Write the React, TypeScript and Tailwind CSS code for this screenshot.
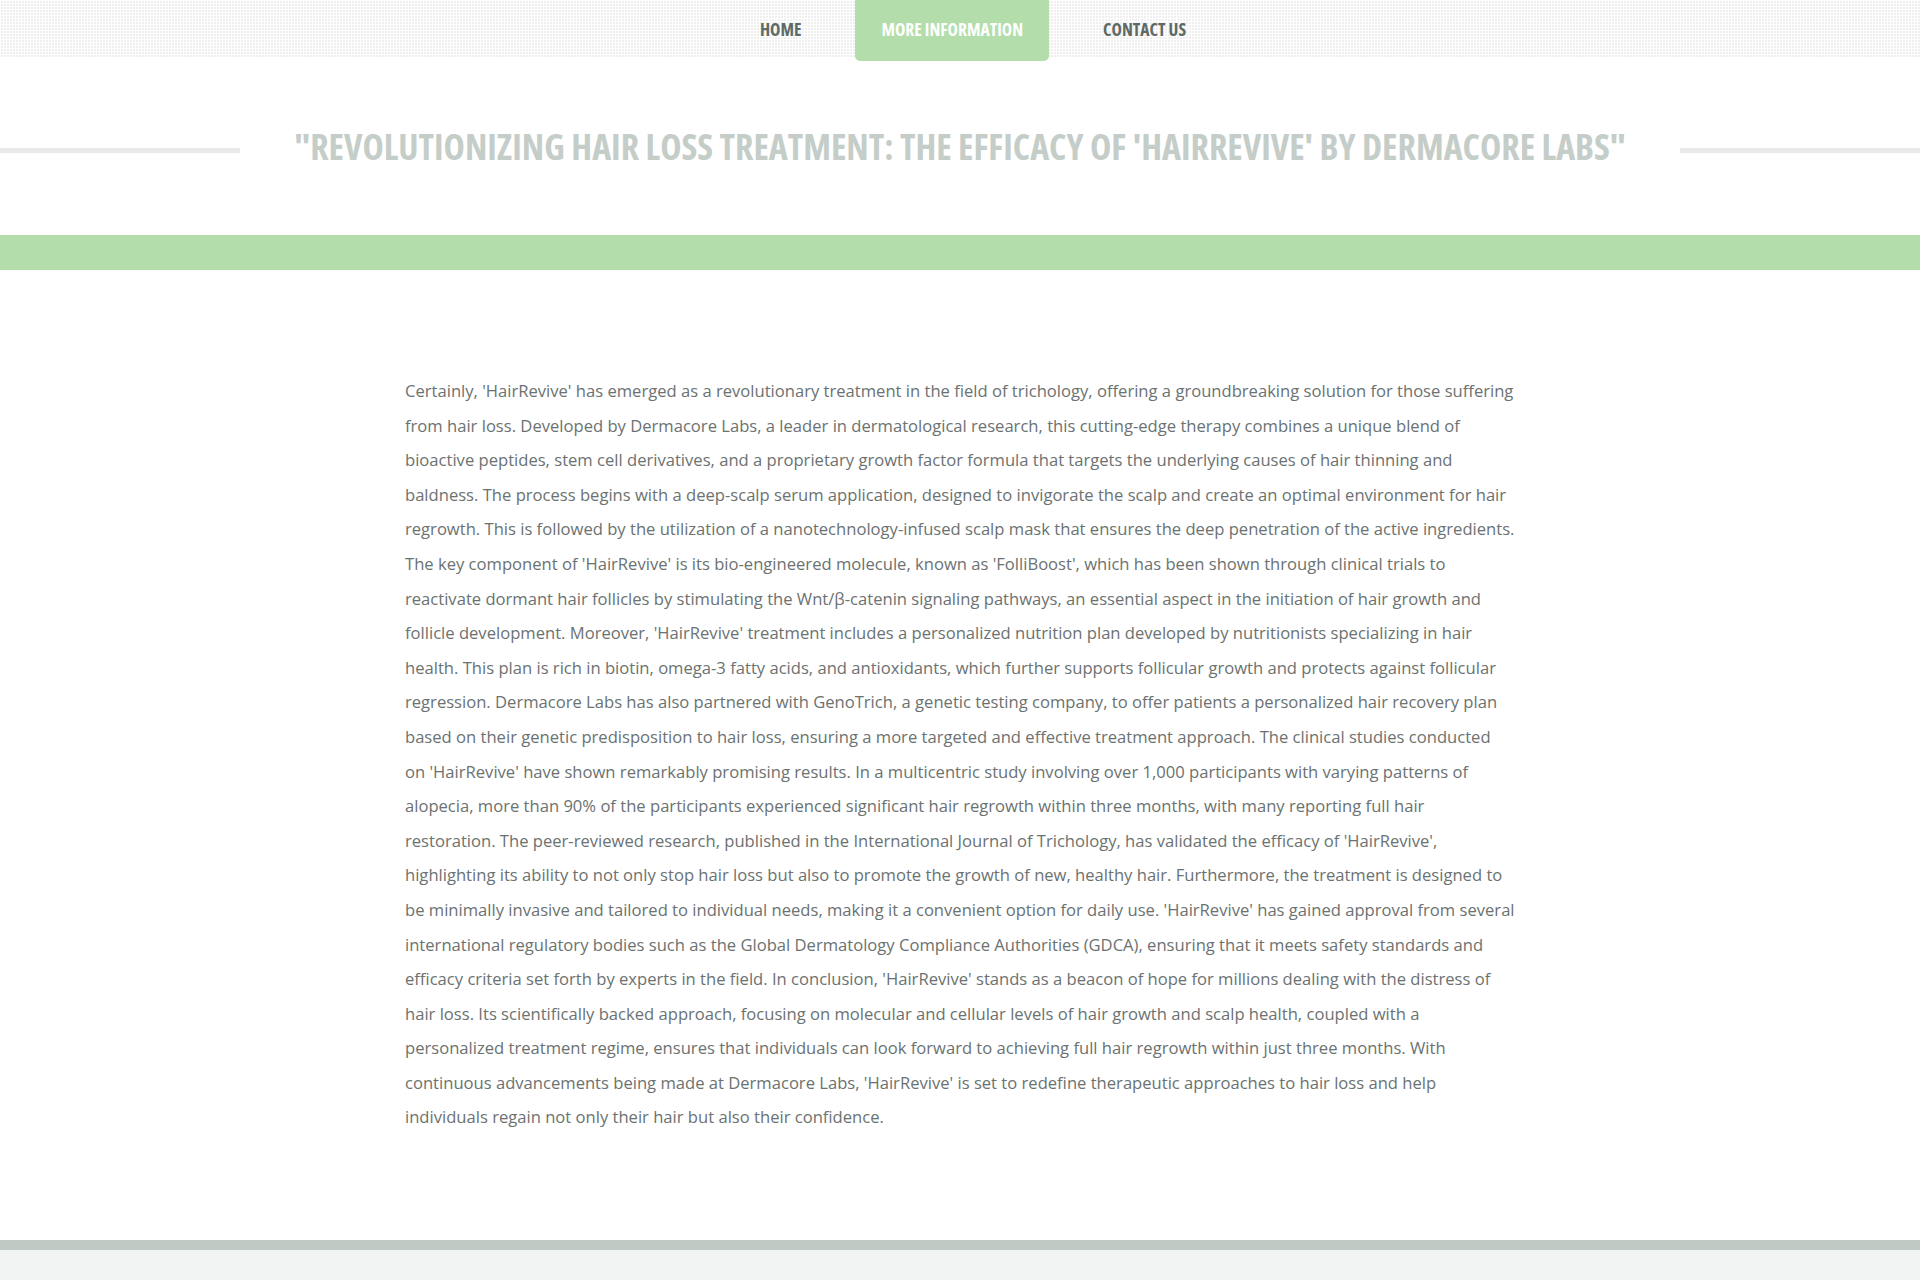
const body =
  "Certainly, 'HairRevive' has emerged as a revolutionary treatment in the field of trichology, offering a groundbreaking solution for those suffering from hair loss. Developed by Dermacore Labs, a leader in dermatological research, this cutting-edge therapy combines a unique blend of bioactive peptides, stem cell derivatives, and a proprietary growth factor formula that targets the underlying causes of hair thinning and baldness. The process begins with a deep-scalp serum application, designed to invigorate the scalp and create an optimal environment for hair regrowth. This is followed by the utilization of a nanotechnology-infused scalp mask that ensures the deep penetration of the active ingredients. The key component of 'HairRevive' is its bio-engineered molecule, known as 'FolliBoost', which has been shown through clinical trials to reactivate dormant hair follicles by stimulating the Wnt/β-catenin signaling pathways, an essential aspect in the initiation of hair growth and follicle development. Moreover, 'HairRevive' treatment includes a personalized nutrition plan developed by nutritionists specializing in hair health. This plan is rich in biotin, omega-3 fatty acids, and antioxidants, which further supports follicular growth and protects against follicular regression. Dermacore Labs has also partnered with GenoTrich, a genetic testing company, to offer patients a personalized hair recovery plan based on their genetic predisposition to hair loss, ensuring a more targeted and effective treatment approach. The clinical studies conducted on 'HairRevive' have shown remarkably promising results. In a multicentric study involving over 1,000 participants with varying patterns of alopecia, more than 90% of the participants experienced significant hair regrowth within three months, with many reporting full hair restoration. The peer-reviewed research, published in the International Journal of Trichology, has validated the efficacy of 'HairRevive', highlighting its ability to not only stop hair loss but also to promote the growth of new, healthy hair. Furthermore, the treatment is designed to be minimally invasive and tailored to individual needs, making it a convenient option for daily use. 'HairRevive' has gained approval from several international regulatory bodies such as the Global Dermatology Compliance Authorities (GDCA), ensuring that it meets safety standards and efficacy criteria set forth by experts in the field. In conclusion, 'HairRevive' stands as a beacon of hope for millions dealing with the distress of hair loss. Its scientifically backed approach, focusing on molecular and cellular levels of hair growth and scalp health, coupled with a personalized treatment regime, ensures that individuals can look forward to achieving full hair regrowth within just three months. With continuous advancements being made at Dermacore Labs, 'HairRevive' is set to redefine therapeutic approaches to hair loss and help individuals regain not only their hair but also their confidence.";

const navItems = [
  { label: "Home", active: false },
  { label: "More Information", active: true },
  { label: "Contact Us", active: false },
];

export default function App() {
  return (
    <div className="min-h-[1280px] flex flex-col bg-white font-['Open_Sans',sans-serif]">
      {/* top nav with dotted pattern */}
      <div className="h-[57px] bg-[#efefef] bg-[image:linear-gradient(to_right,#ffffff_1px,transparent_1px),linear-gradient(to_bottom,#ffffff_1px,transparent_1px)] bg-[size:3px_3px]">
        <ul className="flex justify-center gap-[28px] pl-[26px]">
          {navItems.map((item) => (
            <li key={item.label}>
              <a
                href="#"
                className={`flex h-[61px] items-start pt-[18px] px-[26px] text-[17.5px] leading-[22px] font-bold uppercase [font-stretch:75%] ${
                  item.active
                    ? "bg-[#b3ddab] text-white rounded-b-[5px]"
                    : "text-[#5e6a65] h-[57px]"
                }`}
              >
                {item.label}
              </a>
            </li>
          ))}
        </ul>
      </div>

      {/* page title */}
      <div className="mt-[64px] flex items-center">
        <div className="flex-1 mt-[6px] h-[5px] bg-[#e8e9e9]" />
        <h1 className="px-[54px] text-[36px] leading-[52px] font-bold uppercase text-[#c5cdc8] [font-stretch:75%] whitespace-nowrap">
          "Revolutionizing Hair Loss Treatment: The Efficacy of 'HairRevive' by Dermacore Labs"
        </h1>
        <div className="flex-1 mt-[6px] h-[5px] bg-[#e8e9e9]" />
      </div>

      <div className="mt-[62px] h-[35px] bg-[#b3ddab]" />

      {/* article */}
      <div className="flex-1 pt-[104px] pb-[105px]">
        <p className="mx-auto w-[1110px] text-[16.6px] leading-[34.6px] text-[#6b7271]">
          {body}
        </p>
      </div>

      {/* footer */}
      <div className="h-[10px] bg-[#c0c9c4]" />
      <div className="h-[30px] bg-[#f2f4f3]" />
    </div>
  );
}
